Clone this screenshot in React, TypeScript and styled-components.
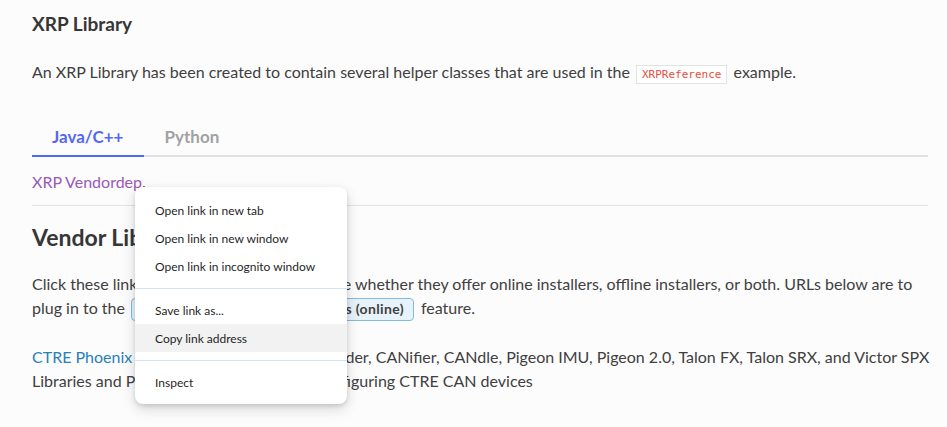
import React from "react";
import styled, { createGlobalStyle } from "styled-components";

const GlobalStyle = createGlobalStyle`
  html, body { margin: 0; padding: 0; background: #fcfcfc; }
  body {
    font-family: Lato, "Open Sans", sans-serif;
    color: #404040;
    width: 947px;
    height: 427px;
    overflow: hidden;
  }
`;

const Page = styled.main`
  position: relative;
  padding: 12px 19px 0 32px;
  width: 896px;
`;

const Title = styled.h2<{ $size: number; $lh: number; $top?: number }>`
  margin: ${p => p.$top ?? 0}px 0 0;
  font-size: ${p => p.$size}px;
  line-height: ${p => p.$lh}px;
  font-weight: 700;
  color: #363636;
`;

const Para = styled.p<{ $top: number }>`
  margin: ${p => p.$top}px 0 0;
  font-size: 16px;
  line-height: 24px;
  white-space: nowrap;
`;

const Code = styled.code`
  font-family: "DejaVu Sans Mono", "Liberation Mono", monospace;
  font-size: 11px;
  line-height: 13px;
  color: #e74c3c;
  background: #fff;
  border: 1px solid #e1e4e5;
  padding: 2px 5px;
  margin: 0 2px;
`;

const TabBar = styled.div`
  display: flex;
  margin-top: 30px;
  border-bottom: 2px solid #e0e0e0;
`;

const Tab = styled.div<{ $active?: boolean }>`
  padding: 11px 21px 6px 20px;
  margin-bottom: -2px;
  font-size: 17px;
  line-height: 24px;
  font-weight: 700;
  color: ${p => (p.$active ? "#5468f2" : "#a2a2a2")};
  border-bottom: 2px solid ${p => (p.$active ? "#4f67f5" : "transparent")};
`;

const Link = styled.a<{ $visited?: boolean }>`
  color: ${p => (p.$visited ? "#9b59b6" : "#2980b9")};
  text-decoration: none;
`;

const Rule = styled.hr`
  margin: 11px 0 0;
  border: 0;
  border-top: 1px solid #e1e4e5;
  height: 0;
`;

const GuiLabel = styled.span`
  display: inline-block;
  border: 1px solid #7fbbe3;
  background: #e7f2fa;
  border-radius: 4px;
  font-size: 14px;
  line-height: 18px;
  font-weight: 700;
  letter-spacing: 0.35px;
  color: #404040;
  padding: 1px 9px 2px;
  margin: 0 3px 0 2px;
`;

const Menu = styled.div`
  position: absolute;
  left: 135px;
  top: 187px;
  width: 212px;
  padding: 9px 0 8px;
  background: #fff;
  border-radius: 8px;
  box-shadow: 0 2px 4px rgba(0, 0, 0, 0.12), 0 5px 14px rgba(0, 0, 0, 0.15);
  font-family: Lato, "Open Sans", sans-serif;
  font-size: 12px;
  color: #1f1f1f;
`;

const MenuItem = styled.div<{ $hover?: boolean }>`
  display: flex;
  align-items: center;
  height: 28px;
  padding: 0 20px;
  background: ${p => (p.$hover ? "#f2f2f2" : "transparent")};
`;

const MenuSep = styled.div`
  height: 16px;
  display: flex;
  align-items: center;
  &::after {
    content: "";
    flex: 1;
    height: 1px;
    background: #d3e3f4;
  }
`;

export default function App() {
  return (
    <>
      <GlobalStyle />
      <Page>
        <Title $size={19} $lh={24}>XRP Library</Title>
        <Para $top={24}>
          An XRP Library has been created to contain several helper classes that are used in the{" "}
          <Code>XRPReference</Code> example.
        </Para>
        <TabBar>
          <Tab $active>Java/C++</Tab>
          <Tab>Python</Tab>
        </TabBar>
        <Para $top={13}>
          <Link $visited href="#">XRP Vendordep</Link>.
        </Para>
        <Rule />
        <Title $size={23} $lh={28} $top={17}>Vendor Libraries</Title>
        <Para $top={21}>
          Click these links to visit the vendor site to see whether they offer online installers, offline installers, or both. URLs below are to
          <br />
          plug in to the <GuiLabel>VS Code -&gt; Install New Libraries (online)</GuiLabel> feature.
        </Para>
        <Para $top={24}>
          <Link href="#">CTRE Phoenix Framework</Link> - Contains CANcoder, CANifier, CANdle, Pigeon IMU, Pigeon 2.0, Talon FX, Talon SRX, and Victor SPX
          <br />
          Libraries and Phoenix Tuner program for configuring CTRE CAN devices
        </Para>
        <Menu>
          <MenuItem>Open link in new tab</MenuItem>
          <MenuItem>Open link in new window</MenuItem>
          <MenuItem>Open link in incognito window</MenuItem>
          <MenuSep />
          <MenuItem>Save link as...</MenuItem>
          <MenuItem $hover>Copy link address</MenuItem>
          <MenuSep />
          <MenuItem>Inspect</MenuItem>
        </Menu>
      </Page>
    </>
  );
}
